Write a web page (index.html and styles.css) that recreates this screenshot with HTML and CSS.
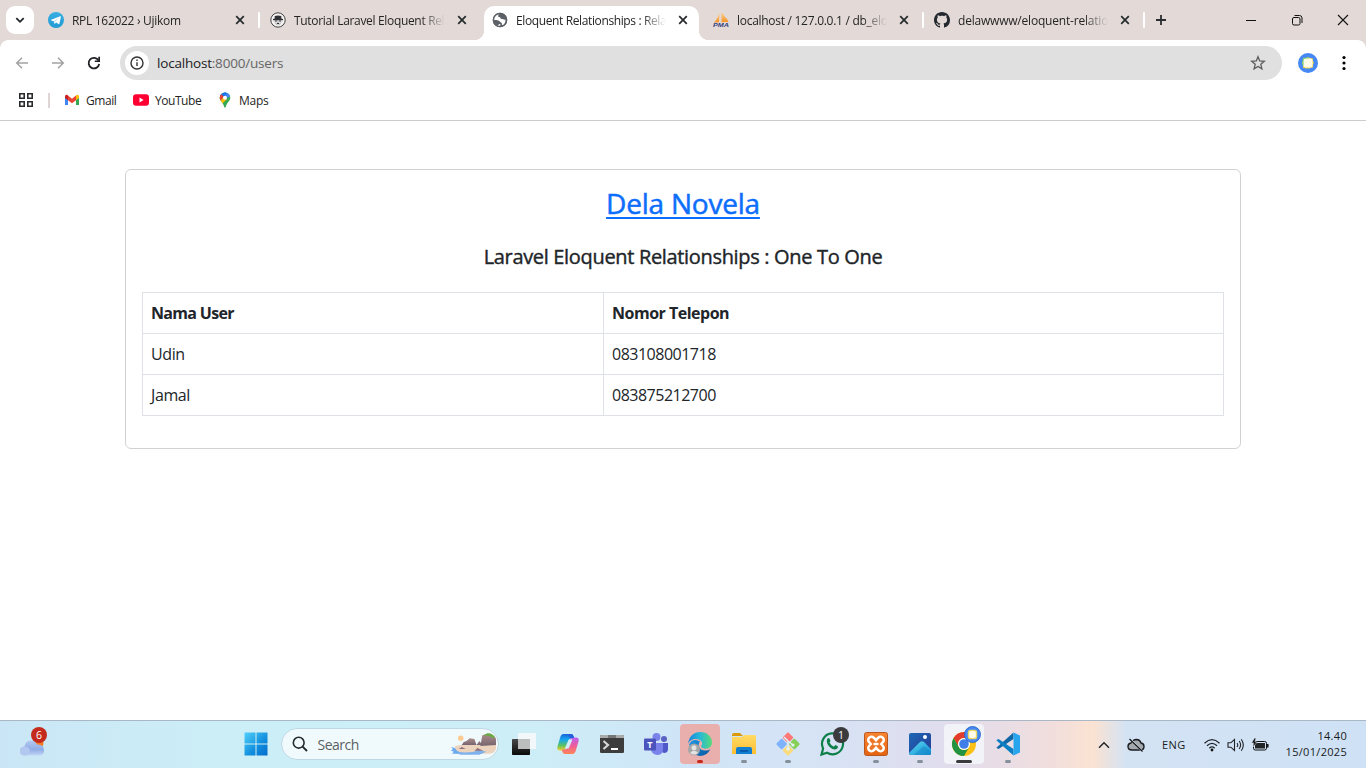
FILE: index.html
```html
<!DOCTYPE html>
<html lang="id">
<head>
<meta charset="utf-8">
<title>Eloquent Relationships</title>
<link rel="stylesheet" href="styles.css">
</head>
<body>
<svg width="0" height="0" class="defs">
  <defs>
    <symbol id="close" viewBox="0 0 16 16"><path d="M4.200 4.200l7.600 7.600M11.800 4.200l-7.600 7.600" fill="none" stroke="#252a2d" stroke-width="1.700"/></symbol>
    <linearGradient id="tg" x2="0" y2="1"><stop stop-color="#38b0e3"/><stop offset="1" stop-color="#229ad3"/></linearGradient>
    <linearGradient id="win" gradientUnits="userSpaceOnUse" x1="0" y1="0" x2="24" y2="24"><stop stop-color="#55d3fb"/><stop offset=".55" stop-color="#1492df"/><stop offset="1" stop-color="#0069cb"/></linearGradient>
    <linearGradient id="cloud" x2="0" y2="1"><stop stop-color="#b4c8f0"/><stop offset=".6" stop-color="#8fadE6"/><stop offset="1" stop-color="#c4d4f5"/></linearGradient>
    <linearGradient id="dark" x2="0" y2="1"><stop stop-color="#484848"/><stop offset="1" stop-color="#090909"/></linearGradient>
    <linearGradient id="copA" x2="0" y2="1"><stop stop-color="#1664dc"/><stop offset=".35" stop-color="#16a9ed"/><stop offset=".7" stop-color="#5cc261"/><stop offset="1" stop-color="#f4d229"/></linearGradient>
    <linearGradient id="copB" x2="0" y2="1"><stop stop-color="#b961f2"/><stop offset=".5" stop-color="#ee5c98"/><stop offset="1" stop-color="#ff8656"/></linearGradient>
    <linearGradient id="edgeA" x2="1" y2="0"><stop stop-color="#1684db"/><stop offset=".5" stop-color="#27b9d6"/><stop offset="1" stop-color="#57db79"/></linearGradient>
    <linearGradient id="edgeB" x2="1" y2="1"><stop stop-color="#1d9be8"/><stop offset="1" stop-color="#08569f"/></linearGradient>
    <linearGradient id="folder" x2="0" y2="1"><stop stop-color="#ffdb65"/><stop offset="1" stop-color="#fdbd32"/></linearGradient>
    <linearGradient id="photo" x2="1" y2="1"><stop stop-color="#1c67b5"/><stop offset="1" stop-color="#293a93"/></linearGradient>
    <linearGradient id="hill" x2="1" y2="1"><stop stop-color="#5bdcf2"/><stop offset="1" stop-color="#128bd1"/></linearGradient>
    <linearGradient id="xampp" x2="0" y2="1"><stop stop-color="#f68534"/><stop offset="1" stop-color="#e36311"/></linearGradient>
    <linearGradient id="sail" x2="0" y2="1"><stop stop-color="#fbd29a"/><stop offset="1" stop-color="#f6931e"/></linearGradient>
    <linearGradient id="rock" x2="0" y2="1"><stop stop-color="#b08f8c"/><stop offset="1" stop-color="#75656f"/></linearGradient>
  </defs>
</svg>

<header class="tabbar">
  <button class="tab-search"><svg width="12" height="12" viewBox="0 0 12 12"><path d="M2.300 4.200L6 7.800l3.700-3.600" fill="none" stroke="#20252a" stroke-width="1.800"/></svg></button>
  <nav class="tabs">
    <div class="tab">
      <svg class="fav" viewBox="0 0 16 16"><circle cx="8" cy="8" r="8" fill="url(#tg)"/><path d="M3.200 7.800l9-3.600c.5-.2.8.1.7.6l-1.500 7c-.1.5-.5.6-.9.3L8.200 10.500 7 11.600c-.3.3-.6.2-.7-.2l-.5-2.200-2.500-.7c-.5-.2-.5-.5-.1-.7z" fill="#fff"/><path d="M6.100 9.100l4.700-3-3.500 3.400-.5 1.700z" fill="#b5dbed"/></svg>
      <span class="title t1">RPL 162022 › Ujikom</span><svg class="x"><use href="#close"/></svg><i class="sep"></i>
    </div>
    <div class="tab">
      <svg class="fav" viewBox="0 0 16 16"><circle cx="8" cy="8" r="7.200" fill="#f4f1f1" stroke="#444" stroke-width="1"/><path d="M4.700 4q3.300-1 6.600 0v2.600l1.700.5v1.200H3V7.100l1.700-.5z" fill="#303136"/><path d="M5 8v2.500q.5 2.500 3 2.500t3-2.500V8" fill="none" stroke="#aaa" stroke-width=".6"/><path d="M5 9h2.300M8.700 9H11M6.800 11.400h2.400" stroke="#303136" stroke-width="1.100"/></svg>
      <span class="title t2">Tutorial Laravel Eloquent Rela</span><svg class="x"><use href="#close"/></svg>
    </div>
    <div class="tab active">
      <svg class="fav" viewBox="0 0 16 16"><circle cx="8" cy="8" r="7.200" fill="#5b6067"/><path d="M8.500 1.300c-1.800.2-1.400 1.600-2.200 2.100-.9.500.2 1.800 1.500 1.800 1 0 .3 1.800 1.800 1.800 1.700 0 2.500 1.200 4 .5.400 2.400-.7 4.400-2.500 5.800-.8-.2-1.600-.6-1.300-1.700.3-1-1-.9-1.400-1.600-.5-1-1.700-1.500-3.200-1.800-1.700-.3-2.400-.3-3.500.3.300 2.300 1.800 4.200 3.500 4.900 1.500.2 1.200-1.700 2.600-1.500 1 .2.300 1.800.4 2.300C4.600 14.600 1.500 12 1.500 8S4.500 1.200 8.500 1.300z" fill="#fff"/><circle cx="8" cy="8" r="6.600" fill="none" stroke="#5b6067" stroke-width="1.500"/></svg>
      <span class="title t3">Eloquent Relationships : Rela</span><svg class="x"><use href="#close"/></svg>
    </div>
    <div class="tab">
      <svg class="fav" viewBox="0 0 16 16"><path d="M6.500.5L6 10.200 1 10.500Q4.500 7 6.500.5zM8.500.3q4.500 4 5 9.800l-5 .2zM12 5q3 2 3.500 5h-2z" fill="url(#sail)"/><text x="0" y="15" textLength="16" lengthAdjust="spacingAndGlyphs" class="pma">PMA</text></svg>
      <span class="title t4">localhost / 127.0.0.1 / db_elo</span><svg class="x"><use href="#close"/></svg><i class="sep"></i>
    </div>
    <div class="tab">
      <svg class="fav" viewBox="0 0 16 16"><path fill="#24292f" d="M8 0C3.580 0 0 3.580 0 8c0 3.540 2.290 6.530 5.470 7.590.4.070.55-.17.55-.38 0-.19-.01-.82-.01-1.490-2.010.37-2.530-.49-2.690-.94-.09-.23-.48-.94-.82-1.130-.28-.15-.68-.52-.01-.53.63-.01 1.080.58 1.230.82.720 1.210 1.870.87 2.330.66.070-.52.28-.87.510-1.070-1.780-.2-3.640-.89-3.640-3.950 0-.87.310-1.590.82-2.150-.08-.2-.36-1.020.08-2.120 0 0 .67-.21 2.200.82.640-.18 1.320-.27 2-.27s1.360.09 2 .27c1.530-1.040 2.200-.82 2.200-.82.440 1.100.16 1.920.08 2.120.51.560.82 1.270.82 2.150 0 3.070-1.870 3.750-3.650 3.950.29.250.54.730.54 1.480 0 1.070-.01 1.930-.01 2.200 0 .21.150.46.550.38A8.010 8.010 0 0 0 16 8c0-4.420-3.580-8-8-8z"/></svg>
      <span class="title t5">delawwww/eloquent-relation</span><svg class="x"><use href="#close"/></svg><i class="sep"></i>
    </div>
  </nav>
  <button class="newtab"><svg width="12" height="12"><path d="M6 1v10M1 6h10" stroke="#2a2d30" stroke-width="1.800"/></svg></button>
  <div class="winctl">
    <svg viewBox="0 0 12 12"><path d="M1 6.500h10" stroke="#111"/></svg>
    <svg viewBox="0 0 12 12"><rect x="1.500" y="3.500" width="7.500" height="7.500" rx="1.500" fill="none" stroke="#111"/><path d="M3.500 1.500H8.500q2.500 0 2.500 2.500v5" fill="none" stroke="#111"/></svg>
    <svg viewBox="0 0 12 12"><path d="M1 1l10 10M11 1L1 11" stroke="#111" stroke-width="1.100"/></svg>
  </div>
</header>

<section class="chrome">
  <div class="toolbar">
    <svg class="nav" viewBox="0 0 16 16"><path d="M14 8H2.800M8 2.700L2.700 8 8 13.300" fill="none" stroke="#a2a2a2" stroke-width="1.500"/></svg>
    <svg class="nav" viewBox="0 0 16 16"><path d="M2 8h11.200M8 2.700L13.300 8 8 13.300" fill="none" stroke="#a2a2a2" stroke-width="1.500"/></svg>
    <svg class="nav" viewBox="0 0 16 16"><path d="M12.600 5.500A5.300 5.300 0 1 0 13.200 9" fill="none" stroke="#202124" stroke-width="1.800"/><path d="M14 1.800V7H8.800V5.500h3.500V1.800z" fill="#202124"/></svg>
    <div class="omnibox">
      <span class="info"><svg width="14" height="14" viewBox="0 0 14 14"><circle cx="7" cy="7" r="6" fill="none" stroke="#333" stroke-width="1.400"/><path d="M7 6.200V10M7 3.600v1.500" stroke="#333" stroke-width="1.400"/></svg></span>
      <span class="url">localhost<b>:8000/users</b></span>
      <svg class="star" width="16" height="16" viewBox="0 0 16 16"><path d="M8 1.700l1.700 4.300 4.600.3-3.500 3 1.100 4.500L8 11.400l-3.900 2.400 1.100-4.500-3.500-3L6.300 6z" fill="none" stroke="#5c5c5c" stroke-width="1.300"/></svg>
    </div>
    <svg class="avatar" viewBox="0 0 20 20"><circle cx="10" cy="10" r="10" fill="#4688f4"/><path d="M5 5h3l2-1 2 1 3 .5V8l1 2-1 1v3.500l-3 .5-1 1-1-1-2 1-1-1H5v-3L4 10l1-2z" fill="#f2d448"/><path d="M4.500 7L6 4.800h3l1-1 1 2-5 7H4.500z" fill="#67c965"/><rect x="5.500" y="5.500" width="9" height="9" rx="2" fill="#fffbe7"/></svg>
    <svg class="menu" viewBox="0 0 4 16"><circle cx="2" cy="2.500" r="1.600"/><circle cx="2" cy="8" r="1.600"/><circle cx="2" cy="13.500" r="1.600"/></svg>
  </div>
  <div class="bookmarks">
    <svg class="apps" viewBox="0 0 14 14"><path d="M.8.8h4.400v4.400H.8zM8.800.8h4.400v4.400H8.800zM.8 8.800h4.400v4.400H.8zM8.800 8.800h4.400v4.400H8.800z" fill="none" stroke="#292b2d" stroke-width="1.600"/></svg>
    <i class="bsep"></i>
    <span class="bm gmail"><svg width="16" height="16" viewBox="0 0 16 16"><path d="M1 4.500v8.500h3V7z" fill="#4285f4"/><path d="M12 7v6h3V4.500z" fill="#34a853"/><path d="M4 3.500v4.700l4 3 4-3V3.500L8 6.800z" fill="#ea4335"/><path d="M1 4.500Q1 2.500 3 2.800L4 3.500v4.700L1 6z" fill="#c5221f"/><path d="M15 4.500q0-2-2-1.700l-1 .7v4.700L15 6z" fill="#fbbc04"/></svg><span>Gmail</span></span>
    <span class="bm yt"><svg width="16" height="16" viewBox="0 0 16 16"><rect y="2.300" width="16" height="11.400" rx="3" fill="#f03"/><path d="M6.500 5.600v4.800L10.600 8z" fill="#fff"/></svg><span>YouTube</span></span>
    <span class="bm maps"><svg width="16" height="16" viewBox="0 0 16 16"><clipPath id="pin"><path d="M8 .5A5.300 5.300 0 0 1 13.300 5.800c0 3.500-3.800 5-4.500 9.200q-.8 1-1.600 0C6.500 10.800 2.700 9.300 2.700 5.800A5.300 5.300 0 0 1 8 .5z"/></clipPath><g clip-path="url(#pin)"><path d="M0 0h16v16H0z" fill="#34a853"/><path d="M6 0h10v3L8 7z" fill="#4285f4"/><path d="M2 3l3-3h6L5 7z" fill="#1a73e8"/><path d="M2 6V3l2-1 3 3-4 4z" fill="#ea4335"/><path d="M3 9l3-3 4 1-5 5z" fill="#fbbc04"/></g><circle cx="8" cy="5.800" r="2" fill="#fff"/></svg><span>Maps</span></span>
  </div>
</section>

<main class="page">
  <div class="card">
    <h3><a href="#">Dela Novela</a></h3>
    <h5>Laravel Eloquent Relationships : One To One</h5>
    <table>
      <thead><tr><th class="name">Nama User</th><th>Nomor Telepon</th></tr></thead>
      <tbody>
        <tr><td>Udin</td><td class="phone">083108001718</td></tr>
        <tr><td>Jamal</td><td class="phone">083875212700</td></tr>
      </tbody>
    </table>
  </div>
</main>

<footer class="taskbar">
  <div class="weather">
    <svg width="28" height="26" viewBox="0 0 28 26"><circle cx="21" cy="11.500" r="4.500" fill="#f57b26"/><path d="M7 23.500Q2 23.500 2 19q0-4 4.500-4.500Q7.500 8.500 13 8.500q4.500 0 6 4 7-.5 7 6 0 5-5 5z" fill="url(#cloud)"/><path d="M2 19q0-4 4.500-4.500 4 0 5.500 3.500-1.500 5.500-5 5.500-5 0-5-4.500z" fill="#b3c8f1"/></svg>
    <span class="badge">6</span>
  </div>
  <div class="dock">
    <div class="app"><svg width="24" height="24" viewBox="0 0 24 24"><path d="M.5.5h11v11H.5zM12.500.5h11v11h-11zM.5 12.500h11v11H.5zM12.500 12.500h11v11h-11z" fill="url(#win)"/></svg></div>
    <div class="search">
      <svg width="16" height="16" viewBox="0 0 16 16"><circle cx="6.700" cy="6.700" r="5.400" fill="none" stroke="#242a2e" stroke-width="1.600"/><path d="M10.600 10.600l4.400 4.400" stroke="#242a2e" stroke-width="1.900"/></svg>
      <span>Search</span>
      <svg class="scene" width="47" height="24" viewBox="0 0 48 24"><circle cx="11" cy="6" r="2.800" fill="#fdcb91"/><path d="M5 14q8-2 18-1h24v6q-2 3-8 3H6z" fill="#ecd3bd"/><path d="M1 15l4 1 2 3 6 3H2l2-2-3-1 2-2z" fill="#69a9ee"/><path d="M8 20q12 2 22-2l7 2-7 3H10z" fill="#7fb2ec"/><path d="M12 13l2-3 3-1 3-3 5 1 2 6zM27 13l3-4 3 4z" fill="url(#rock)"/><path d="M31 14l2-11 9-2 5 4v8z" fill="url(#rock)"/><path d="M34 3l4-2q7 0 9 4l-4 .5-3-2z" fill="#68ad42"/><path d="M25 19l3-3 6 3zM9 17l3-2 4 2z" fill="#8e717c"/></svg>
    </div>
    <div class="app"><svg width="26" height="26" viewBox="0 0 26 26"><rect x="1" y="8" width="18" height="16" rx=".8" fill="url(#dark)"/><rect x="7" y="2" width="18" height="16" rx=".8" fill="#f4f8f9" fill-opacity=".94"/><path d="M7 8h12v10H7z" fill="#bcbdbd"/></svg></div>
    <div class="app"><svg width="24" height="24" viewBox="0 0 24 24"><path d="M7.500 2H15q2 0 2.500 2l.7 2.500h-3Q13 6.500 12 10l-1.700 5.500Q9.500 18.500 7 18.500H4q-3.500 0-2.500-4L4 6q1-4 3.500-4z" fill="url(#copA)"/><path d="M16.500 22H9q-2 0-2.500-2l-.7-2.500h3q2.200 0 3.200-3.500l1.700-5.500q.8-3 3.300-3h3q3.500 0 2.500 4L20 18q-1 4-3.500 4z" fill="url(#copB)"/><path d="M11.500 2H15q2 0 2.500 2l.6 2h-3.600q-1.500 0-2-2z" fill="#2560dc"/><path d="M12.700 7.500h3.800l-3.800 9H8.800z" fill="#d2ecf7"/></svg></div>
    <div class="app"><svg width="24" height="20" viewBox="0 0 24 20"><rect y="1" width="24" height="18" rx="1.200" fill="#3d3d3d"/><path d="M0 4V2q0-1 1-1h22q1 0 1 1v2z" fill="#777"/><path d="M0 4V2q0-1 1-1h7v3zM16 1h7q1 0 1 1v2h-8z" fill="#aaa"/><path d="M3.500 7l4.500 4-4.500 4" fill="none" stroke="#d5d5d5" stroke-width="2.200"/><path d="M11 15h7" stroke="#fff" stroke-width="2"/></svg></div>
    <div class="app"><svg width="26" height="24" viewBox="0 0 26 24"><circle cx="21" cy="7" r="3" fill="#5a62c3"/><circle cx="13.500" cy="5" r="4" fill="#7b83eb"/><path d="M17 11h8v6q0 4-4 4-4-1-4-5z" fill="#5059c9"/><path d="M8 11h12v6q0 6-6 6-6-1-6-6z" fill="#7b83eb"/><rect x="1" y="6.500" width="12" height="12" rx="1" fill="#4b53bc"/><text x="4.300" y="15.800" class="teams">T</text></svg></div>
    <div class="app edge on"><svg width="26" height="26" viewBox="0 0 26 26"><path d="M2 14C4 8 9 8 13 10.500 9.500 15 13 20 19 19.500q3 0 4.500-1.500Q20 25 13 25 5 25 2 14z" fill="url(#edgeB)"/><path d="M1 13C2 5 7 1 13 1c7.500 0 12 5 12 10.500 0 5-5 7.500-9.500 5.500-2-1-1.500-2-.5-3.500 1-2.500-2-5.500-6-5.500-4 0-7 2-8 5z" fill="url(#edgeA)"/><circle cx="7" cy="18.500" r="6" fill="#a3a6a7"/><circle cx="7" cy="16.800" r="2.500" fill="#e5e3e2"/><path d="M3 22q4-5 8 0-4 3-8 0z" fill="#e5e3e2"/></svg><i class="mark red"></i></div>
    <div class="app"><svg width="24" height="24" viewBox="0 0 24 24"><path d="M0 3q0-2 2-2h6l3 3H0z" fill="#db9909"/><path d="M0 5h10l2-2h11q1 0 1 1v18H0z" fill="url(#folder)"/><path d="M4 22v-5q0-2 2-2h12q2 0 2 2v5z" fill="#127ed0"/><path d="M8 19h8" stroke="#0756a4" stroke-width="1.600"/></svg><i class="mark"></i></div>
    <div class="app"><svg width="26" height="26" viewBox="0 0 26 26"><g transform="rotate(45 13 13)"><rect x="4.500" y="4.500" width="8" height="8" rx="1" fill="#ff7777"/><rect x="13.500" y="4.500" width="8" height="8" rx="1" fill="#87d057"/><rect x="4.500" y="13.500" width="8" height="8" rx="1" fill="#80b3ff"/><rect x="13.500" y="13.500" width="8" height="8" rx="1" fill="#fadb7a"/></g><path d="M9 6l4 4v8M13 10l5 4" fill="none" stroke="#dcecf4" stroke-width="1.600"/><circle cx="13" cy="18" r="1.800" fill="#e9f2f5"/><circle cx="18" cy="14" r="1.600" fill="#e9f2f5"/></svg><i class="mark"></i></div>
    <div class="app"><svg width="26" height="26" viewBox="0 0 26 26"><path d="M2.500 23.500l1.600-6A10.500 10.500 0 1 1 8 21.800z" fill="none" stroke="#0d804a" stroke-width="2.200"/><path d="M8.500 7.500q1-.8 2 0l1 2.500-1 1.500q1.500 3 4.300 4.200l1.500-1.600 2.600 1.200q.5 3-3.500 3.200C10.500 18 6 11 8.500 7.500z" fill="#0d804a"/></svg><span class="badge one">1</span></div>
    <div class="app"><svg width="24" height="24" viewBox="0 0 24 24"><rect x=".5" y=".5" width="23" height="23" rx="2" fill="url(#xampp)" stroke="#bb571c"/><path d="M7.500 8l9 8M16.500 8l-9 8" fill="none" stroke="#fff" stroke-width="9" stroke-linecap="round"/><path d="M7.500 8l3.500 4-3.500 4M16.500 8L13 12l3.500 4" fill="none" stroke="#ee7426" stroke-width="4" stroke-linecap="round" stroke-linejoin="round"/><path d="M9.500 12h5" stroke="#fff" stroke-width="2.400"/></svg><i class="mark"></i></div>
    <div class="app"><svg width="22" height="24" viewBox="0 0 22 24"><rect y="1" width="22" height="22" rx="2" fill="url(#photo)"/><path d="M0 21L11 10q2-1.500 4 0l7 7v4q0 2-2 2H2q-2 0-2-2z" fill="url(#hill)"/><path d="M5 23l8.500-8q1.500-1 3 0l5.500 5v1q0 2-2 2z" fill="#1685c9" fill-opacity=".5"/><circle cx="16" cy="5" r="2" fill="#fff"/></svg><i class="mark"></i></div>
    <div class="app chr on"><svg width="26" height="26" viewBox="0 0 26 26"><circle cx="13" cy="13" r="12" fill="#fbc116"/><path d="M2.600 7A12 12 0 0 1 23.400 7H13a6 6 0 0 0-5.200 9z" fill="#e33b2e"/><path d="M2.600 7A12 12 0 0 0 13 25l5.200-9A6 6 0 0 1 7.800 16z" fill="#229342"/><circle cx="13" cy="13" r="6" fill="#fff"/><circle cx="13" cy="13" r="4.800" fill="#3f7de8"/></svg><svg class="mini" viewBox="0 0 20 20"><circle cx="10" cy="10" r="9.400" fill="#4688f4" stroke="#2464c5"/><rect x="4.500" y="4.500" width="11" height="11" rx="3" fill="#e9d865"/><rect x="6" y="6" width="8" height="8" rx="2" fill="#fffbe7"/></svg><i class="mark wide"></i></div>
    <div class="app"><svg width="24" height="24" viewBox="0 0 24 24"><path d="M.3 15.700L17.500.5V7L2.600 17z" fill="#1268a7"/><path d="M.3 8.300L2.600 7l14.900 10v6.500L.3 8.300z" fill="#0b7ec4"/><path d="M17.500.5L24 3.500v17l-6.500 3z" fill="#29a5ed"/></svg><i class="mark"></i></div>
  </div>
  <div class="tray">
    <svg class="chev" viewBox="0 0 12 8"><path d="M1 6.800l5-5 5 5" fill="none" stroke="#1d2024" stroke-width="1.400"/></svg>
    <svg class="cloudoff" viewBox="0 0 18 14"><path d="M5 12Q1 12 1 8.500 1 5.500 4 5 6 1.500 9.500 1.500 13 1.700 14 5q3 .5 3 3.500 0 3.500-3.500 3.500z" fill="#a3a9ac" stroke="#1b1d20" stroke-width="1.400"/><path d="M3 1l12.500 12.500" stroke="#d5e5f4" stroke-width="2"/><path d="M2.500 1l13 12.500" stroke="#111" stroke-width="1.200"/></svg>
    <span class="lang">ENG</span>
    <svg class="wifi" viewBox="0 0 18 14"><path d="M1.500 5.200q7.500-7 15 0M4 7.800q5-4.700 10 0M6.300 10.200q2.700-2.500 5.400 0" fill="none" stroke="#202328" stroke-width="1.200"/><circle cx="9" cy="12" r="1.400" fill="#111"/></svg>
    <svg class="vol" viewBox="0 0 18 14"><path d="M1 4.800h2.800L7.500 1.500v11L3.800 9.200H1z" fill="none" stroke="#202328" stroke-width="1.100"/><path d="M10 5q1.500 2 0 4M12.200 3q2.800 4 0 8M14.300 1.200q4 5.800 0 11.600" fill="none" stroke="#202328" stroke-width="1.100"/></svg>
    <svg class="bat" viewBox="0 0 18 14"><rect x="2.500" y="3.500" width="13" height="8.500" rx="1.800" fill="#d5e5f4" stroke="#111"/><path d="M4 5h10v5.500H4z" fill="#222528"/><path d="M16.800 6v3.500" stroke="#111" stroke-width="1.500"/><path d="M3.500 0L.5 5h2.300L2 9l4.300-5H4L5 0z" fill="#111" stroke="#d5e5f4" stroke-width=".6"/></svg>
    <div class="clock"><span class="time">14.40</span><span class="date">15/01/2025</span></div>
  </div>
</footer>
</body>
</html>
```
FILE: styles.css
```css
* { box-sizing: border-box; }
body { margin: 0; width: 1366px; height: 768px; overflow: hidden; display: flex; flex-direction: column; background: #fff; color: #212529; font-family: "Open Sans", "Noto Sans", sans-serif; }
svg { display: block; flex: none; }
button { border: 0; padding: 0; background: none; display: flex; align-items: center; justify-content: center; }
.defs { position: absolute; }

.tabbar { height: 40px; flex: none; display: flex; align-items: center; background: #e3dad7; }
.tab-search { width: 28px; height: 28px; margin: 0 6px; border-radius: 9px; background: #fff; }
.tabs { display: flex; height: 40px; }
.tab { width: 221px; height: 40px; padding-left: 8px; display: flex; align-items: center; position: relative; }
.tab:nth-child(-n+2) { width: 222px; }
.tab:nth-child(-n+2) .title { width: 151px; }
.fav { width: 16px; height: 16px; margin-right: 8px; position: relative; }
.title { width: 150px; padding-top: 1px; font-size: 12px; white-space: nowrap; line-height: 21px; color: #252525; -webkit-mask-image: linear-gradient(90deg, #000 84%, transparent); mask-image: linear-gradient(90deg, #000 84%, transparent); position: relative; }
.t1 { letter-spacing: -.3px; }
.t2 { letter-spacing: -.33px; }
.t3 { letter-spacing: -.38px; }
.t4 { letter-spacing: -.28px; }
.t5 { letter-spacing: -.2px; }
.x { width: 16px; height: 16px; margin-left: 9px; position: relative; }
.sep { width: 2px; height: 16px; margin-left: 10px; background: #fff; border-radius: 1px; }
.active::before { content: ""; position: absolute; left: 0; top: 6px; width: 215px; height: 34px; background: #fff; border-radius: 10px 10px 0 0; }
.active::after { content: ""; position: absolute; left: -10px; bottom: 0; width: 235px; height: 10px; background: radial-gradient(circle at 0 0, transparent 10px, #fff 10.500px) left / 10px 10px no-repeat, radial-gradient(circle at 100% 0, transparent 10px, #fff 10.500px) right / 10px 10px no-repeat; }
.newtab { width: 28px; height: 28px; }
.winctl { margin-left: auto; display: flex; gap: 34px; padding-right: 17px; }
.winctl svg { width: 12px; height: 12px; }

.chrome { height: 81px; flex: none; background: #fff; border-bottom: 1px solid #ccc; position: relative; }
.chrome::before { content: ""; position: absolute; inset: 0 0 auto; height: 8px; background: radial-gradient(circle at 100% 100%, transparent 7.500px, #e3dad7 8px) left / 8px 8px no-repeat, radial-gradient(circle at 0 100%, transparent 7.500px, #e3dad7 8px) right / 8px 8px no-repeat; }
.toolbar { height: 46px; padding: 0 20px 0 14px; display: flex; align-items: center; }
.nav { width: 16px; height: 16px; margin-right: 20px; }
.nav:nth-child(3) { margin-right: 18px; }
.omnibox { width: 1162px; height: 34px; padding: 0 16px 0 5px; border-radius: 17px; background: #e0e0e0; display: flex; align-items: center; }
.info { width: 24px; height: 24px; border-radius: 50%; background: #fff; display: flex; align-items: center; justify-content: center; }
.url { margin-left: 8px; font-size: 13.500px; letter-spacing: -.2px; color: #202124; }
.url b { color: #666; font-weight: 400; }
.star { margin-left: auto; }
.avatar { width: 20px; height: 20px; margin-left: 16px; }
.menu { width: 4px; height: 16px; margin-left: auto; }
.bookmarks { height: 28px; padding-left: 19px; display: flex; align-items: center; font-size: 12px; color: #252525; letter-spacing: -.45px; }
.apps { width: 14px; height: 14px; }
.bsep { width: 2px; height: 15px; margin: 0 14px 0 15px; background: #ded6d4; }
.bm { display: flex; align-items: center; gap: 6px; }
.gmail { width: 69px; }
.yt { width: 84px; }
.maps { letter-spacing: -.25px; }

.page { flex: 1; padding: 48px 125px; }
.card { width: 1116px; height: 280px; padding: 17px 16px 16px; border: 1px solid #d2d2d2; border-radius: 6px; }
h3, h5 { text-align: center; font-weight: 400; line-height: 1.2; }
h3 { margin: 0 0 24px; height: 34px; font-size: 28px; letter-spacing: -.22px; -webkit-text-stroke: .5px #0d6efd; }
h3 a { color: #0d6efd; text-decoration-thickness: 2px; text-underline-offset: 3px; text-decoration-skip-ink: none; }
h5 { margin: 0 0 23px; height: 24px; font-size: 20px; letter-spacing: -.33px; -webkit-text-stroke: .4px #212529; }
table { width: 1082px; border-collapse: collapse; table-layout: fixed; font-size: 16px; line-height: 24px; }
th, td { height: 41px; padding: 8px; border: 1px solid #dee2e6; text-align: left; letter-spacing: -.4px; }
th { letter-spacing: -.5px; }
td.phone { letter-spacing: -.5px; }
th.name { width: 461px; letter-spacing: -.68px; }

.taskbar { height: 48px; flex: none; display: flex; border-top: 1px solid #a9b8c4; background: linear-gradient(90deg, #cae6f6 0, #cceff7 17%, #cdeef7 38%, #cfe5f7 50%, #d7e3f5 61%, #e1dcec 70%, #f1dedd 77%, #fbe2d2 80%, #d3e3f4 82.500%, #cfe1f5 100%); }
.weather { width: 233.5px; padding: 11px 0 0 18px; position: relative; }
.badge { position: absolute; left: 31px; top: 6px; width: 16px; height: 16px; border-radius: 50%; background: #c42b1c; color: #fff; font-size: 10.500px; line-height: 16px; text-align: center; }
.dock { display: flex; }
.app { width: 40px; height: 40px; margin: 3px 2px; display: flex; align-items: center; justify-content: center; position: relative; border-radius: 4px; }
.search { width: 218px; height: 32px; margin: 7px 3.5px 0 3px; padding: 0 1px 0 10px; display: flex; align-items: center; border-radius: 16px; border: 1px solid #bfd8e3; background: #f0fafd; font-size: 14px; color: #5b5f61; letter-spacing: -.5px; }
.search span { margin-left: 10px; }
.scene { margin-left: auto; border-radius: 0 12px 12px 0; }
.edge.on { background: #e8afad; }
.chr.on { background: #f1f3f8; }
.mark { position: absolute; bottom: 1px; left: 17px; width: 6px; height: 3px; border-radius: 2px; background: #83909b; }
.mark.red { background: #c42b1c; }
.mark.wide { left: 12px; width: 16px; background: #3b3b3d; }
.badge.one { left: 21px; top: 3px; background: #3b3b3d; }
.mini { position: absolute; width: 17px; height: 17px; left: 20px; top: 2px; }
.pma { font: italic 700 6px "Liberation Sans", sans-serif; fill: #343e80; }
.teams { font: 700 9px "Open Sans", sans-serif; fill: #fff; }
.tray { flex: 1; display: flex; align-items: center; padding: 0 19px 0 68px; color: #191c20; font-size: 11px; }
.chev { width: 12px; height: 8px; }
.cloudoff { width: 18px; height: 14px; margin-left: 17px; }
.lang { width: 25px; margin-left: 17px; letter-spacing: .4px; white-space: nowrap; }
.wifi { width: 18px; height: 14px; margin-left: 16px; }
.vol { width: 18px; height: 14px; margin-left: 6px; }
.bat { width: 18px; height: 14px; margin-left: 6px; }
.clock { margin-left: auto; padding-bottom: 1px; display: flex; flex-direction: column; text-align: right; line-height: 16px; letter-spacing: .3px; }
```
